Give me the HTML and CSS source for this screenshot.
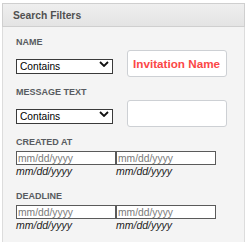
FILE: index.html
```html
<!DOCTYPE html>
<html lang="en">

<head>
  <meta charset="UTF-8">
  <title>Search Filters</title>
  <link rel="stylesheet" href="styles.css">
</head>

<body>
  <section class="panel">
    <div class="panel-heading">Search Filters</div>
    <div class="panel-body">
      <div class="filter">
        <label class="filter-label" for="name_op">Name</label>
        <div class="filter-row">
          <div class="select-wrap">
            <select id="name_op">
              <option>Contains</option>
            </select>
            <svg class="chevron" width="10" height="6" viewBox="0 0 10 6">
              <path d="M1 1 L5 5 L9 1" fill="none" stroke="#111" stroke-width="1.8" />
            </svg>
          </div>
          <input type="text" class="text-input highlight" value="Invitation Name">
        </div>
      </div>
      <div class="filter">
        <label class="filter-label" for="message_op">Message text</label>
        <div class="filter-row">
          <div class="select-wrap">
            <select id="message_op">
              <option>Contains</option>
            </select>
            <svg class="chevron" width="10" height="6" viewBox="0 0 10 6">
              <path d="M1 1 L5 5 L9 1" fill="none" stroke="#111" stroke-width="1.8" />
            </svg>
          </div>
          <input type="text" class="text-input">
        </div>
      </div>
      <div class="filter dates">
        <label class="filter-label">Created at</label>
        <div class="date-range">
          <div class="date-col">
            <input type="text" class="date-input" placeholder="mm/dd/yyyy">
            <span class="date-hint">mm/dd/yyyy</span>
          </div>
          <div class="date-col">
            <input type="text" class="date-input" placeholder="mm/dd/yyyy">
            <span class="date-hint">mm/dd/yyyy</span>
          </div>
        </div>
      </div>
      <div class="filter dates">
        <label class="filter-label">Deadline</label>
        <div class="date-range">
          <div class="date-col">
            <input type="text" class="date-input" placeholder="mm/dd/yyyy">
            <span class="date-hint">mm/dd/yyyy</span>
          </div>
          <div class="date-col">
            <input type="text" class="date-input" placeholder="mm/dd/yyyy">
            <span class="date-hint">mm/dd/yyyy</span>
          </div>
        </div>
      </div>
    </div>
  </section>
</body>

</html>
```

FILE: styles.css
```css
body {
  margin: 0;
  background: #fff;
  font-family: "Liberation Sans", Arial, sans-serif;
}

.panel {
  margin: 3px 0 0 2px;
  width: 243px;
  border: 1px solid #dcdcdc;
  border-top: 0;
  background: #f4f4f4;
  box-sizing: border-box;
}

.panel-heading {
  height: 24px;
  box-sizing: border-box;
  margin-left: -1px;
  margin-right: -1px;
  padding: 5px 0 0 10px;
  border: 1px solid #cfcfcf;
  background: linear-gradient(#efefef, #e4e4e4);
  color: #505050;
  font-size: 10.3px;
  font-weight: bold;
  line-height: 13px;
}

.panel-body {
  padding: 10px 13px 20px;
}

.filter {
  margin-bottom: 10px;
}

.filter-label {
  display: block;
  margin-bottom: 2px;
  color: #585b60;
  font-size: 9px;
  font-weight: bold;
  line-height: 11px;
  text-transform: uppercase;
}

.dates .filter-label {
  margin-bottom: 3px;
}

.filter-row {
  display: flex;
  align-items: center;
  height: 27px;
}

.select-wrap {
  position: relative;
  width: 97px;
  height: 15px;
  margin-right: 14px;
}

.select-wrap select {
  appearance: none;
  -webkit-appearance: none;
  width: 100%;
  height: 15px;
  margin: 0;
  padding: 0 0 0 3px;
  border: 1px solid #3a3a3a;
  border-radius: 0;
  background: #fff;
  color: #000;
  font-family: inherit;
  font-size: 10.2px;
  line-height: 13px;
  outline: none;
}

.chevron {
  position: absolute;
  top: 5px;
  left: 83px;
}

.text-input {
  width: 100px;
  height: 27px;
  box-sizing: border-box;
  margin: 0;
  padding: 0 0 0 5px;
  border: 1px solid #cdd0d4;
  border-radius: 3px;
  background: #fff;
  font-family: inherit;
  font-size: 12px;
  outline: none;
}

.text-input.highlight {
  color: #fb4747;
  font-size: 11.7px;
  font-weight: bold;
}

.date-range {
  display: flex;
}

.date-col {
  display: flex;
  flex-direction: column;
  width: 100px;
}

.date-input {
  width: 100px;
  height: 14px;
  box-sizing: border-box;
  margin: 0;
  padding: 0 0 0 1px;
  border: 1px solid #5a5a5a;
  border-radius: 0;
  background: #fff;
  font-family: inherit;
  font-size: 10.3px;
  line-height: 12px;
  outline: none;
}

.date-input::placeholder {
  color: #7a7a7a;
}

.date-hint {
  padding-bottom: 3px;
  color: #222;
  font-size: 10.5px;
  font-style: italic;
  line-height: 13px;
}
```
